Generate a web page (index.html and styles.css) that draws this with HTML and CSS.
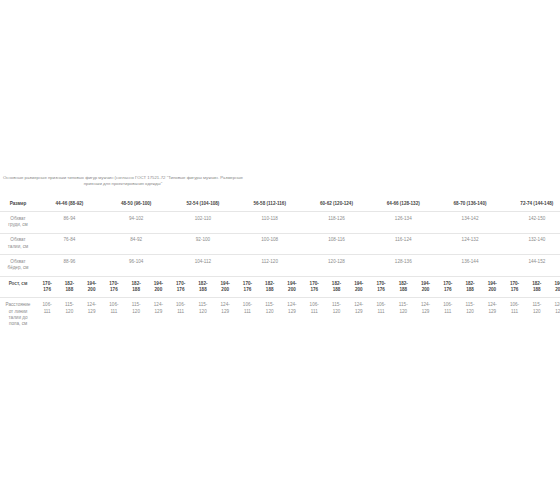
FILE: index.html
```html
<!DOCTYPE html>
<html lang="ru">
<head>
<meta charset="utf-8">
<link rel="stylesheet" href="styles.css">
</head>
<body>
<div class="page">
  <div class="caption">Основные размерные признаки типовых фигур мужчин (согласно ГОСТ 17521-72 "Типовые фигуры мужчин. Размерные признаки для проектирования одежды"</div>
  <table class="sizes">
    <colgroup>
      <col class="c-label">
      <col class="c-sub"><col class="c-sub"><col class="c-sub">
      <col class="c-sub"><col class="c-sub"><col class="c-sub">
      <col class="c-sub"><col class="c-sub"><col class="c-sub">
      <col class="c-sub"><col class="c-sub"><col class="c-sub">
      <col class="c-sub"><col class="c-sub"><col class="c-sub">
      <col class="c-sub"><col class="c-sub"><col class="c-sub">
      <col class="c-sub"><col class="c-sub"><col class="c-sub">
      <col class="c-sub"><col class="c-sub"><col class="c-sub">
    </colgroup>
    <thead>
      <tr class="head">
        <th>Размер</th>
        <th colspan="3">44-46 (88-92)</th>
        <th colspan="3">48-50 (96-100)</th>
        <th colspan="3">52-54 (104-108)</th>
        <th colspan="3">56-58 (112-116)</th>
        <th colspan="3">60-62 (120-124)</th>
        <th colspan="3">64-66 (128-132)</th>
        <th colspan="3">68-70 (136-140)</th>
        <th colspan="3">72-74 (144-148)</th>
      </tr>
    </thead>
    <tbody>
      <tr>
        <td class="label">Обхват груди, см</td>
        <td colspan="3">86-94</td><td colspan="3">94-102</td><td colspan="3">102-110</td><td colspan="3">110-118</td>
        <td colspan="3">118-126</td><td colspan="3">126-134</td><td colspan="3">134-142</td><td colspan="3">142-150</td>
      </tr>
      <tr>
        <td class="label">Обхват талии, см</td>
        <td colspan="3">76-84</td><td colspan="3">84-92</td><td colspan="3">92-100</td><td colspan="3">100-108</td>
        <td colspan="3">108-116</td><td colspan="3">116-124</td><td colspan="3">124-132</td><td colspan="3">132-140</td>
      </tr>
      <tr>
        <td class="label">Обхват бёдер, см</td>
        <td colspan="3">88-96</td><td colspan="3">96-104</td><td colspan="3">104-112</td><td colspan="3">112-120</td>
        <td colspan="3">120-128</td><td colspan="3">128-136</td><td colspan="3">136-144</td><td colspan="3">144-152</td>
      </tr>
      <tr class="growth">
        <td class="label">Рост, см</td>
        <td>170-176</td><td>182-188</td><td>194-200</td>
        <td>170-176</td><td>182-188</td><td>194-200</td>
        <td>170-176</td><td>182-188</td><td>194-200</td>
        <td>170-176</td><td>182-188</td><td>194-200</td>
        <td>170-176</td><td>182-188</td><td>194-200</td>
        <td>170-176</td><td>182-188</td><td>194-200</td>
        <td>170-176</td><td>182-188</td><td>194-200</td>
        <td>170-176</td><td>182-188</td><td>194-200</td>
      </tr>
      <tr class="last">
        <td class="label">Расстояние от линии талии до пола, см</td>
        <td>106-111</td><td>115-120</td><td>124-129</td>
        <td>106-111</td><td>115-120</td><td>124-129</td>
        <td>106-111</td><td>115-120</td><td>124-129</td>
        <td>106-111</td><td>115-120</td><td>124-129</td>
        <td>106-111</td><td>115-120</td><td>124-129</td>
        <td>106-111</td><td>115-120</td><td>124-129</td>
        <td>106-111</td><td>115-120</td><td>124-129</td>
        <td>106-111</td><td>115-120</td><td>124-129</td>
      </tr>
    </tbody>
  </table>
</div>
</body>
</html>
```
FILE: styles.css
```css
html, body {
  margin: 0;
  padding: 0;
  overflow: hidden;
  background: #ffffff;
}

body {
  font-family: "Liberation Sans", Arial, sans-serif;
  color: #888888;
}

.page {
  padding-top: 175px;
  width: 569px;
}

.caption {
  width: 246px;
  text-align: center;
  font-size: 4.3px;
  line-height: 6.4px;
  color: #8a8a8a;
  margin-bottom: 9px;
}

.sizes {
  table-layout: fixed;
  border-collapse: collapse;
  width: 569px;
  font-size: 4.6px;
  line-height: 6.4px;
}

.c-label { width: 36px; }
.c-sub { width: 22.25px; }

.sizes th,
.sizes td {
  padding: 3.9px 4px;
  text-align: center;
  vertical-align: top;
  border-bottom: 1px solid #e6e6e6;
}

.sizes th {
  font-weight: bold;
  color: #444444;
}

.sizes td {
  color: #8c8c8c;
}

.sizes td.label {
  padding: 3.9px 5px;
}

.growth td {
  font-weight: bold;
  color: #444444;
}

.growth td.label {
  color: #555555;
}

.last td {
  border-bottom: none;
}
```
